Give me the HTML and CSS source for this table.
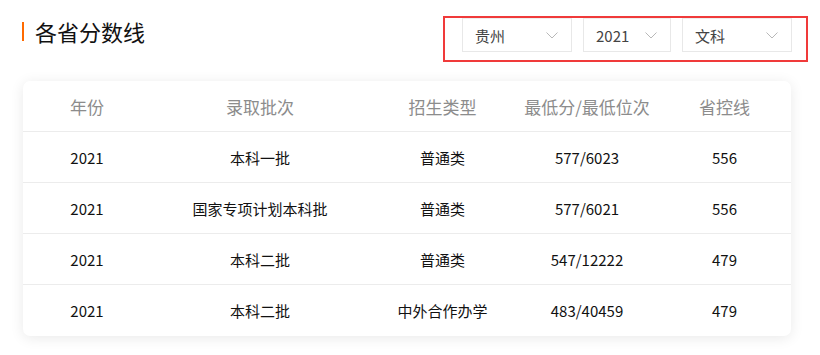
FILE: index.html
```html
<!DOCTYPE html>
<html lang="zh">
<head>
<meta charset="utf-8">
<link rel="stylesheet" href="styles.css">
</head>
<body>
<div class="page">
  <div class="topbar">
    <h2 class="title">各省分数线</h2>
    <div class="filters">
      <div class="select w-wide"><span>贵州</span><svg class="chev" viewBox="0 0 12 7" width="12" height="7"><path d="M0.5 0.5 L6 6 L11.5 0.5" fill="none" stroke="#b8b8b8" stroke-width="1"/></svg></div>
      <div class="select w-narrow"><span>2021</span><svg class="chev" viewBox="0 0 12 7" width="12" height="7"><path d="M0.5 0.5 L6 6 L11.5 0.5" fill="none" stroke="#b8b8b8" stroke-width="1"/></svg></div>
      <div class="select w-wide"><span>文科</span><svg class="chev" viewBox="0 0 12 7" width="12" height="7"><path d="M0.5 0.5 L6 6 L11.5 0.5" fill="none" stroke="#b8b8b8" stroke-width="1"/></svg></div>
    </div>
  </div>
  <div class="card">
    <div class="row head">
      <div>年份</div><div>录取批次</div><div>招生类型</div><div>最低分/最低位次</div><div>省控线</div>
    </div>
    <div class="row">
      <div>2021</div><div>本科一批</div><div>普通类</div><div>577/6023</div><div>556</div>
    </div>
    <div class="row">
      <div>2021</div><div>国家专项计划本科批</div><div>普通类</div><div>577/6021</div><div>556</div>
    </div>
    <div class="row">
      <div>2021</div><div>本科二批</div><div>普通类</div><div>547/12222</div><div>479</div>
    </div>
    <div class="row last">
      <div>2021</div><div>本科二批</div><div>中外合作办学</div><div>483/40459</div><div>479</div>
    </div>
  </div>
</div>
</body>
</html>
```
FILE: styles.css
```css
* { box-sizing: border-box; }
html, body { margin: 0; padding: 0; background: #fff; }
body {
  font-family: "Noto Sans CJK SC", "Noto Sans", sans-serif;
  color: #222;
}
.page {
  width: 820px;
  height: 355px;
  padding: 16px 0 0 22px;
}
.topbar {
  display: flex;
  justify-content: space-between;
  align-items: flex-start;
  width: 786px;
}
.title {
  margin: 6px 0 0 0;
  padding-left: 11px;
  border-left: 2px solid #ff6a00;
  font-size: 22px;
  font-weight: 400;
  line-height: 19px;
  height: 19px;
  color: #111;
  display: flex;
  align-items: center;
}
.filters {
  display: flex;
  gap: 11px;
  border: 2px solid #f03a3a;
  height: 46px;
  padding: 0 14px 0 17px;
}
.select {
  height: 34px;
  border: 1px solid #e8e8e8;
  border-top-color: #eeeeee;
  display: flex;
  align-items: center;
  justify-content: space-between;
  padding: 0 13px 0 12px;
  font-size: 15px;
  color: #444;
}
.w-wide { width: 110px; }
.w-narrow { width: 88px; }
.chev { display: block; }
.card {
  margin-top: 19px;
  margin-left: 1px;
  width: 768px;
  border-radius: 7px;
  background: #fff;
  box-shadow: 0 2px 14px rgba(0, 0, 0, 0.09);
  overflow: hidden;
}
.row {
  display: grid;
  grid-template-columns: 128px 218px 147px 142px 133px;
  height: 51px;
  align-items: center;
  border-bottom: 1px solid #ececec;
  font-size: 15px;
  color: #111;
}
.row > div { text-align: center; }
.row.last { border-bottom: none; }
.row.head {
  font-size: 17px;
  color: #8c8c8c;
}
```
